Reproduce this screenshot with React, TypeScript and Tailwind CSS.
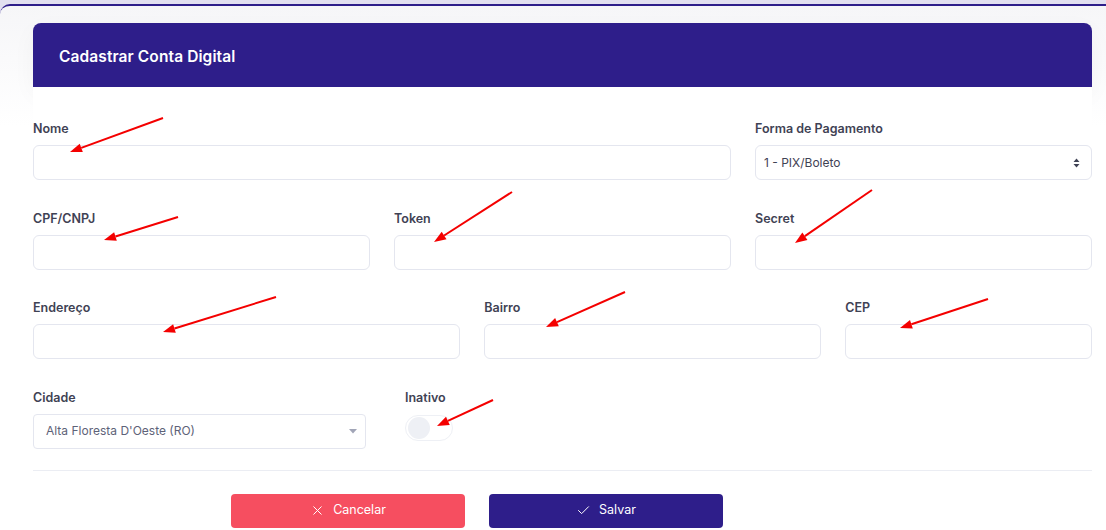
import { Check, X } from "lucide-react";

const font = { fontFamily: "Inter, 'Liberation Sans', sans-serif" };

function Field({ label, span, children }: { label: string; span: string; children?: React.ReactNode }) {
  return (
    <div className={span}>
      <label className="block text-[12.5px] font-semibold text-[#3f4254] mb-[8px] leading-[16px]">{label}</label>
      {children ?? <input className="block w-full h-[35px] rounded-[6px] border border-[#e4e6ef] bg-white outline-none" />}
    </div>
  );
}

// red annotation arrows drawn on top of the form
const arrows = [
  [163, 118, 70, 152],
  [178, 217, 104, 240],
  [512, 192, 434, 242],
  [872, 190, 795, 243],
  [276, 297, 163, 332],
  [625, 292, 546, 327],
  [988, 299, 900, 328],
  [493, 400, 437, 426],
];

function Arrows() {
  return (
    <svg className="absolute inset-0 pointer-events-none" width="1106" height="530">
      {arrows.map(([x1, y1, x2, y2], i) => {
        const a = Math.atan2(y2 - y1, x2 - x1);
        const len = 12;
        const w = 4.5;
        const bx = x2 - len * Math.cos(a);
        const by = y2 - len * Math.sin(a);
        const p1 = `${bx + w * Math.sin(a)},${by - w * Math.cos(a)}`;
        const p2 = `${bx - w * Math.sin(a)},${by + w * Math.cos(a)}`;
        return (
          <g key={i}>
            <line x1={x1} y1={y1} x2={bx} y2={by} stroke="#f40000" strokeWidth="2" />
            <polygon points={`${x2},${y2} ${p1} ${p2}`} fill="#f40000" />
          </g>
        );
      })}
    </svg>
  );
}

export default function App() {
  return (
    <div className="relative w-[1106px] h-[530px] overflow-hidden bg-[#e2e0f0] pt-[4px]" style={font}>
      <div className="h-full bg-white border-t-2 border-[#2e1e8a] rounded-tl-[10px] px-[33px] pt-[17px] bg-gradient-to-b from-[#f6f6f8] to-white to-[120px]">
        <div className="h-[64px] w-[1059px] bg-[#2e1e8a] rounded-t-[8px] flex items-center px-[26px] pt-[3px] shadow-[0_8px_24px_rgba(0,0,0,0.04)]">
          <h3 className="text-white text-[15.5px] font-semibold tracking-[0.1px]">Cadastrar Conta Digital</h3>
        </div>

        <div className="w-[1059px] bg-white pt-[34px]">
          <div className="grid grid-cols-12 gap-x-6 gap-y-[30.5px]">
            <Field label="Nome" span="col-span-8" />
            <Field label="Forma de Pagamento" span="col-span-4">
              <div className="h-[35px] rounded-[6px] border border-[#e4e6ef] bg-white flex items-center justify-between pl-[8px] pr-[11px] text-[12px] text-[#3f4254]">
                <span>1 - PIX/Boleto</span>
                <svg width="7" height="10" viewBox="0 0 7 10">
                  <path d="M3.5 0.5 L6.5 4 H0.5 Z M3.5 9.5 L6.5 6 H0.5 Z" fill="#3f4254" />
                </svg>
              </div>
            </Field>

            <Field label="CPF/CNPJ" span="col-span-4" />
            <Field label="Token" span="col-span-4" />
            <Field label="Secret" span="col-span-4" />

            <Field label="Endereço" span="col-span-5" />
            <Field label="Bairro" span="col-span-4" />
            <Field label="CEP" span="col-span-3" />

            <Field label="Cidade" span="col-span-4">
              <div className="w-[333px] h-[35px] rounded-[4px] border border-[#e4e6ef] bg-white flex items-center justify-between pl-[12px] pr-[8px] text-[12px] text-[#5e6278]">
                <span>Alta Floresta D'Oeste (RO)</span>
                <svg width="8" height="5" viewBox="0 0 8 5">
                  <path d="M0 0 H8 L4 4.5 Z" fill="#a1a5b7" />
                </svg>
              </div>
            </Field>
            <div className="col-span-3 pl-[11px]">
              <label className="block text-[12.5px] font-semibold text-[#3f4254] mb-[9px] leading-[16px]">Inativo</label>
              <div className="w-[48px] h-[26px] rounded-full border border-[#eef0f5] bg-white flex items-center px-[2px]">
                <div className="w-[22px] h-[22px] rounded-full bg-[#eef0f5]" />
              </div>
            </div>
          </div>

          <div className="mt-[21px] border-t border-[#ebedf3]" />

          <div className="flex gap-6 mt-[23px] ml-[198px]">
            <button className="w-[234px] h-[34px] rounded-[4px] bg-[#f64e60] text-white text-[12.5px] flex items-center justify-center gap-[8px]">
              <X className="w-[15px] h-[15px]" strokeWidth={1.6} />
              Cancelar
            </button>
            <button className="w-[234px] h-[34px] rounded-[4px] bg-[#2e1e8a] text-white text-[12.5px] flex items-center justify-center gap-[8px]">
              <Check className="w-[15px] h-[15px]" strokeWidth={1.6} />
              Salvar
            </button>
          </div>
        </div>
      </div>
      <Arrows />
    </div>
  );
}
